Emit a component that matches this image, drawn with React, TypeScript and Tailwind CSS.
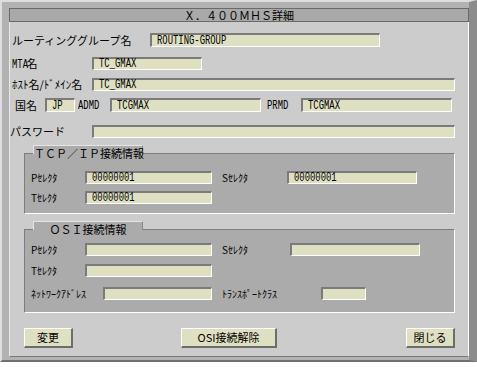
import React from "react";

const jp = "font-['Noto_Sans_CJK_JP',sans-serif]";
const mono = "font-['Liberation_Mono',monospace]";

function Narrow({ children }: { children: React.ReactNode }) {
  return (
    <span className={`inline-block origin-left scale-x-[0.74] ${mono} text-[12px] leading-[10px] whitespace-nowrap`}>
      {children}
    </span>
  );
}

function Field({ w, h = 13, value }: { w: number; h?: number; value?: string }) {
  return (
    <div
      style={{ width: w, height: h }}
      className="shrink-0 bg-[#dfdfc1] border-t-2 border-l-2 border-t-[#7b7b7b] border-l-[#7b7b7b] border-b border-r border-b-white border-r-white pl-[5px] flex items-center text-black"
    >
      {value ? <Narrow>{value}</Narrow> : null}
    </div>
  );
}

function Label({ w, children, className = "" }: { w: number; children: React.ReactNode; className?: string }) {
  return (
    <div style={{ width: w }} className={`shrink-0 ${jp} text-[11px] leading-none text-black whitespace-nowrap ${className}`}>
      {children}
    </div>
  );
}

function SmallLabel({ w, children, className = "" }: { w: number; children: React.ReactNode; className?: string }) {
  return (
    <div style={{ width: w }} className={`shrink-0 ${jp} text-[10px] leading-none text-black whitespace-nowrap ${className}`}>
      {children}
    </div>
  );
}

function Group({ title, h, children }: { title: string; h: number; children: React.ReactNode }) {
  return (
    <div
      style={{ height: h }}
      className="relative ml-[12px] w-[431px] shrink-0 bg-[#ababab] border-t border-l border-t-[#7d7d7d] border-l-[#7d7d7d] border-b border-r border-b-white border-r-white flex flex-col pl-[6px]"
    >
      <div className="absolute left-[8px] -top-[9px] w-[110px] h-[9px] bg-[#ababab] border-t border-l border-t-[#e4e4e4] border-l-[#e4e4e4] border-r border-r-[#8a8a8a]">
        <div className={`w-full text-center ${jp} text-[11px] leading-none pt-[2px] text-black whitespace-nowrap`}>{title}</div>
      </div>
      {children}
    </div>
  );
}

function Button({ w, children }: { w: number; children: React.ReactNode }) {
  return (
    <div
      style={{ width: w }}
      className={`h-[20px] shrink-0 bg-[#dfdfc1] border-t border-l border-t-white border-l-white border-b-2 border-r-2 border-b-[#6d6d6d] border-r-[#6d6d6d] flex items-center justify-center ${jp} text-[11px] leading-none text-black`}
    >
      {children}
    </div>
  );
}

export default function App() {
  return (
    <div className="w-[477px] h-[367px] bg-white">
      <div className="w-[477px] h-[362px] bg-[#b2b2b2] border-t-2 border-l-2 border-t-[#dedede] border-l-[#dedede] border-r-[8px] border-b-2 border-r-[#8c8c8c] border-b-[#707070] pt-[6px] pl-[7px] pb-[3px] flex flex-col">
        <div className={`h-[14px] shrink-0 bg-[#a9a9a9] border border-[#6a6a6a] flex items-center justify-center ${jp} text-[11px] leading-none text-black`}>
          Ｘ．４００ＭＨＳ詳細
        </div>
        <div className="flex-1 bg-[#cccccc] border-l border-r border-l-[#e8e8e8] border-r-white border-b border-b-[#777777] pl-[2px] flex flex-col">
          <div className="mt-[11px] h-[14px] flex items-center">
            <Label w={138}>ルーティンググループ名</Label>
            <Field w={230} h={14} value="ROUTING-GROUP" />
          </div>
          <div className="mt-[10px] h-[13px] flex items-center">
            <Label w={80}>
              <Narrow>MTA</Narrow>
              <span className="-ml-[7px]">名</span>
            </Label>
            <Field w={110} value="TC_GMAX" />
          </div>
          <div className="mt-[8px] h-[13px] flex items-center">
            <Label w={80}>ﾎｽﾄ名/ﾄﾞﾒｲﾝ名</Label>
            <Field w={363} value="TC_GMAX" />
          </div>
          <div className="mt-[7px] h-[14px] flex items-center">
            <Label w={33} className="pl-[3px]">国名</Label>
            <Field w={30} h={14} value="JP" />
            <Label w={35} className="pl-[3px]">
              <Narrow>ADMD</Narrow>
            </Label>
            <Field w={151} h={14} value="TCGMAX" />
            <Label w={40} className="pl-[6px]">
              <Narrow>PRMD</Narrow>
            </Label>
            <Field w={151} h={14} value="TCGMAX" />
          </div>
          <div className="mt-[13px] h-[13px] flex items-center -ml-[2px]">
            <Label w={82}>パスワード</Label>
            <Field w={363} />
          </div>

          <div className="mt-[15px]">
            <Group title="ＴＣＰ／ＩＰ接続情報" h={61}>
              <div className="mt-[17px] h-[13px] flex items-center">
                <SmallLabel w={54}>Pｾﾚｸﾀ</SmallLabel>
                <Field w={127} value="00000001" />
                <SmallLabel w={65} className="ml-[10px]">Sｾﾚｸﾀ</SmallLabel>
                <Field w={130} value="00000001" />
              </div>
              <div className="mt-[7px] h-[13px] flex items-center">
                <SmallLabel w={54}>Tｾﾚｸﾀ</SmallLabel>
                <Field w={127} value="00000001" />
              </div>
            </Group>
          </div>

          <div className="mt-[15px]">
            <Group title="ＯＳＩ接続情報" h={84}>
              <div className="mt-[13px] h-[13px] flex items-center">
                <SmallLabel w={54}>Pｾﾚｸﾀ</SmallLabel>
                <Field w={127} />
                <SmallLabel w={68} className="ml-[10px]">Sｾﾚｸﾀ</SmallLabel>
                <Field w={130} />
              </div>
              <div className="mt-[8px] h-[13px] flex items-center">
                <SmallLabel w={54}>Tｾﾚｸﾀ</SmallLabel>
                <Field w={127} />
              </div>
              <div className="mt-[10px] h-[13px] flex items-center">
                <SmallLabel w={72}>ﾈｯﾄﾜｰｸｱﾄﾞﾚｽ</SmallLabel>
                <Field w={109} />
                <SmallLabel w={99} className="ml-[10px]">ﾄﾗﾝｽﾎﾟｰﾄｸﾗｽ</SmallLabel>
                <Field w={45} />
              </div>
            </Group>
          </div>

          <div className="mt-[15px] h-[20px] flex items-center ml-[12px]">
            <Button w={49}>変更</Button>
            <div className="ml-[108px]">
              <Button w={96}>OSI接続解除</Button>
            </div>
            <div className="ml-[129px]">
              <Button w={49}>閉じる</Button>
            </div>
          </div>
        </div>
      </div>
    </div>
  );
}
